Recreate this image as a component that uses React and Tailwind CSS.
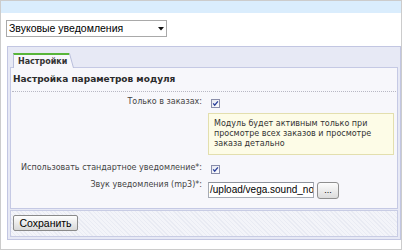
import React from "react";

const dv = { fontFamily: '"DejaVu Sans", Verdana, sans-serif' };
const ls = { fontFamily: '"Liberation Sans", Arial, sans-serif' };

function Check() {
  return (
    <svg width="9" height="9" viewBox="0 0 9 9" className="block">
      <defs>
        <linearGradient id="cbg" x1="0" y1="0" x2="1" y2="1">
          <stop offset="0" stopColor="#e4e6ee" />
          <stop offset="1" stopColor="#ffffff" />
        </linearGradient>
      </defs>
      <rect x="0.5" y="0.5" width="8" height="8" fill="url(#cbg)" stroke="#8a8eaa" />
      <path d="M2.2 4.4 L3.7 6.2 L6.9 2.3" fill="none" stroke="#2a3f9a" strokeWidth="1.3" />
    </svg>
  );
}

export default function App() {
  return (
    <div className="w-[403px] h-[252px] bg-white">
      <div className="w-[402px] h-[250px] border border-[#cccccc] bg-white flex flex-col">
        <div className="h-[12px] bg-[#daedfd] shrink-0" />
        <div className="pl-[5px] pt-[7px] shrink-0">
          <div
            className="w-[161px] h-[17px] border border-[#a9a9a9] bg-white flex items-center pl-[2px] pr-[2px] text-[10.5px] text-black"
            style={ls}
          >
            <span className="flex-1 whitespace-nowrap leading-none">Звуковые уведомления</span>
            <svg width="6" height="4" viewBox="0 0 6 4" className="block">
              <path d="M0 0 H6 L3 3.5 Z" fill="#111" />
            </svg>
          </div>
        </div>
        <div className="ml-[6px] mt-[9px] h-[194px] border border-[#c2c6e2] bg-[#e7e9f5] p-[2px] pt-[6px] flex flex-col shrink-0">
          <div className="flex ml-[3px] h-[15px] -mb-px relative z-10">
            <div
              className="h-[15px] bg-[#f7f7fb] border-l border-[#b9bedb] border-t-2 border-t-[#58b53a] pl-[4px] pr-[1px] flex items-center text-[8px] font-bold text-[#333]"
              style={dv}
            >
              <span className="leading-none whitespace-nowrap">Настройки</span>
            </div>
            <svg width="6" height="15" viewBox="0 0 6 15" className="block">
              <path d="M0 0 H1.5 L5.5 15 H0 Z" fill="#f7f7fb" />
              <path d="M0 1 H1.5" stroke="#58b53a" strokeWidth="2" />
              <path d="M1.5 0.5 L5.5 15" stroke="#b9bedb" strokeWidth="1" fill="none" />
            </svg>
          </div>
          <div className="h-[143px] border border-[#c5c9e4] bg-[#f7f7fb] px-[1px] flex flex-col">
            <div
              className="pt-[5px] pb-[6px] leading-[12px] text-[9px] font-bold text-[#2b2b2b] border-b border-dotted border-[#b8b8c4] pl-[1px]"
              style={dv}
            >
              Настройка параметров модуля
            </div>
            <div className="flex text-[8px] text-[#444]" style={dv}>
              <div className="w-[190px] text-right pt-[5px] leading-[10px]">Только в заказах:</div>
              <div className="pl-[6px] flex flex-col">
                <div className="ml-[3px] mt-[7px]">
                  <Check />
                </div>
                <div className="mt-[5px] w-[186px] border border-[#e3dfae] bg-[#fdfce7] pl-[5px] pt-[5px] pb-[5px] leading-[10px] text-[#333]">
                  <div>Модуль будет активным только при</div>
                  <div>просмотре всех заказов и просмотре</div>
                  <div>заказа детально</div>
                </div>
              </div>
            </div>
            <div className="flex h-[25px] text-[8px] text-[#444]" style={dv}>
              <div className="w-[190px] text-right pt-[8px] leading-[10px] whitespace-nowrap">
                Использовать стандартное уведомление*:
              </div>
              <div className="pl-[6px]">
                <div className="ml-[3px] mt-[10px]">
                  <Check />
                </div>
              </div>
            </div>
            <div className="flex text-[8px] text-[#444]" style={dv}>
              <div className="w-[190px] text-right leading-[10px] whitespace-nowrap">
                Звук уведомления (mp3)*:
              </div>
              <div className="pl-[6px] flex items-start">
                <div
                  className="mt-[2px] w-[106px] h-[16px] border border-[#a6abb4] border-t-[#8e939c] bg-white overflow-hidden whitespace-nowrap pl-[1px] flex items-center text-[10px] text-black"
                  style={ls}
                >
                  <span className="leading-none">/upload/vega.sound_no</span>
                </div>
                <div
                  className="ml-[3px] mt-[2px] w-[22px] h-[17px] border border-[#8f8f8f] rounded-[3px] bg-gradient-to-b from-[#fdfdfd] to-[#dcdcdc] flex items-center justify-center text-[9px] text-black"
                  style={ls}
                >
                  <span className="leading-none">...</span>
                </div>
              </div>
            </div>
          </div>
          <div className="mt-[1px] h-[27px] border border-[#c8cce4] bg-[image:repeating-linear-gradient(45deg,#e9ebf3_0px,#e9ebf3_1px,#f3f4f9_1px,#f3f4f9_3px)] pl-[2px] pt-[4px]">
            <div
              className="w-[65px] h-[16px] border border-[#8a8a8a] rounded-[2px] bg-gradient-to-b from-[#fefefe] to-[#d8d8d8] flex items-center justify-center text-[10.5px] text-black"
              style={ls}
            >
              <span className="leading-none">Сохранить</span>
            </div>
          </div>
        </div>
      </div>
    </div>
  );
}
